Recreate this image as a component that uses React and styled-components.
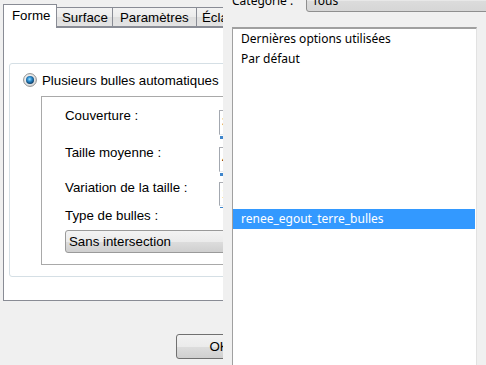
import React from "react";
import styled, { createGlobalStyle } from "styled-components";

const Global = createGlobalStyle`
  html, body { margin: 0; padding: 0; background: #f0f0f0; overflow: hidden; }
  #root { width: 486px; height: 365px; }
`;

const Screen = styled.div`
  width: 486px;
  height: 365px;
  display: flex;
  overflow: hidden;
  background: #f0f0f0;
  font-family: "Liberation Sans", Arial, sans-serif;
  font-size: 13.3px;
  color: #000;
`;

/* ---------- left dialog ---------- */
const LeftPane = styled.div`
  width: 223px;
  flex-shrink: 0;
  overflow: hidden;
  background: #f0f0f0;
`;

const Dialog = styled.div`
  width: 300px;
  padding: 4px 0 0 3px;
  display: flex;
  flex-direction: column;
`;

const TabStrip = styled.div`
  display: flex;
  align-items: flex-end;
  height: 24px;
  margin-bottom: -1px;
  position: relative;
  z-index: 1;
`;

const Tab = styled.div`
  box-sizing: border-box;
  width: ${(p) => p.$w}px;
  flex-shrink: 0;
  height: ${(p) => (p.$active ? 24 : 20)}px;
  margin-bottom: ${(p) => (p.$active ? 0 : 1)}px;
  padding-left: ${(p) => p.$pad}px;
  border: 1px solid #898c95;
  border-bottom: ${(p) => (p.$active ? "none" : "1px solid #898c95")};
  border-left: ${(p) => (p.$first || p.$active ? "1px solid #898c95" : "none")};
  background: ${(p) =>
    p.$active ? "#ffffff" : "linear-gradient(#f3f3f3, #ebebeb 50%, #dedede 51%, #e4e4e4)"};
  line-height: ${(p) => (p.$active ? 22 : 19)}px;
  white-space: nowrap;
  overflow: hidden;
`;

const TabPanel = styled.div`
  box-sizing: border-box;
  width: 292px;
  height: 274px;
  background: #ffffff;
  border: 1px solid #898c95;
  padding: 35px 0 0 5px;
`;

const GroupBox = styled.div`
  box-sizing: border-box;
  width: 280px;
  height: 214px;
  border: 1px solid #d5dfe5;
  border-radius: 3px;
  padding: 8px 0 0 13px;
  display: flex;
  flex-direction: column;
`;

const RadioRow = styled.label`
  display: flex;
  align-items: center;
  gap: 5px;
  height: 16px;
  white-space: nowrap;
`;

const InnerBox = styled.div`
  box-sizing: border-box;
  width: 240px;
  margin: 8px 0 0 18px;
  border: 1px solid #a9a9a9;
  padding: 13px 0 11px 23px;
  display: flex;
  flex-direction: column;
`;

const FieldRow = styled.div`
  display: flex;
  height: ${(p) => p.$h}px;
`;

const FieldLabel = styled.div`
  width: 154px;
  flex-shrink: 0;
  line-height: 16px;
  margin-top: -2px;
  white-space: nowrap;
`;

const EditCol = styled.div`
  display: flex;
  flex-direction: column;
`;

const EditBox = styled.div`
  box-sizing: border-box;
  width: 60px;
  height: 25px;
  background: #fff;
  border: 1px solid #e3e9ef;
  border-top-color: #abadb3;
  border-left-color: #a3a8b0;
  padding-left: 2px;
  line-height: 22px;
`;

const SpinMark = styled.div`
  width: 3px;
  height: 3px;
  margin: 1px 0 0 1px;
  background: #3f86cc;
`;

const TypeLabel = styled.div`
  line-height: 16px;
`;

const Combo = styled.div`
  box-sizing: border-box;
  width: 200px;
  height: 23px;
  margin-top: 6px;
  border: 1px solid #9a9a9a;
  border-radius: 3px;
  background: linear-gradient(#f3f3f3, #ebebeb 50%, #dddddd 51%, #cfcfcf);
  padding-left: 3px;
  line-height: 21px;
  white-space: nowrap;
`;

const ButtonRow = styled.div`
  display: flex;
  padding: 33px 0 0 173px;
`;

const Button = styled.div`
  box-sizing: border-box;
  width: 86px;
  height: 25px;
  border: 1px solid #707070;
  border-radius: 3px;
  background: linear-gradient(#f2f2f2, #ebebeb 50%, #dddddd 51%, #cfcfcf);
  text-align: center;
  line-height: 23px;
`;

/* ---------- right panel ---------- */
const RightPane = styled.div`
  flex: 1;
  min-width: 0;
  display: flex;
  flex-direction: column;
  padding-left: 9px;
  background: #f0f0f0;
  font-family: "Noto Sans", "Liberation Sans", sans-serif;
  font-size: 12px;
`;

const TopRow = styled.div`
  display: flex;
  align-items: center;
  height: 23px;
  margin-top: -11px;
`;

const TopLabel = styled.div`
  width: 74px;
  flex-shrink: 0;
  white-space: nowrap;
`;

const TopCombo = styled.div`
  box-sizing: border-box;
  flex: 1;
  height: 23px;
  margin-right: -10px;
  border: 1px solid #8f8f8f;
  border-radius: 3px;
  background: linear-gradient(#f2f2f2, #e8e8e8 50%, #dcdcdc 51%, #d6d6d6);
  padding-left: 5px;
  line-height: 21px;
`;

const ListBox = styled.div`
  flex: 1;
  margin: 15px 9px 0 0;
  background: #fff;
  border-top: 2px solid #a0a0a0;
  border-left: 1px solid #a0a0a0;
  border-right: 1px solid #e2e2e2;
  display: flex;
  flex-direction: column;
  padding-right: 1px;
`;

const ListItem = styled.div`
  height: 20px;
  line-height: 20px;
  padding-left: 8px;
  white-space: nowrap;
  background: ${(p) => (p.$selected ? "#3399ff" : "transparent")};
  color: ${(p) => (p.$selected ? "#ffffff" : "#000000")};
`;

const RadioIcon = () => (
  <svg width="14" height="14" viewBox="0 0 14 14">
    <defs>
      <linearGradient id="rOuter" x1="0" y1="0" x2="1" y2="1">
        <stop offset="0" stopColor="#f6f6f6" />
        <stop offset="1" stopColor="#d4d4d4" />
      </linearGradient>
      <radialGradient id="rDot" cx="0.45" cy="0.4" r="0.6">
        <stop offset="0" stopColor="#9ce0ff" />
        <stop offset="0.45" stopColor="#2e8ed0" />
        <stop offset="1" stopColor="#0b3a63" />
      </radialGradient>
    </defs>
    <circle cx="7" cy="7" r="6.4" fill="url(#rOuter)" stroke="#8e8f8f" strokeWidth="1" />
    <circle cx="7" cy="7" r="4" fill="url(#rDot)" />
  </svg>
);

const fields = [
  { label: "Couverture :", value: "30", h: 37 },
  { label: "Taille moyenne :", value: "4,0", h: 35 },
  { label: "Variation de la taille :", value: "1,0", h: 26 },
];

const tabs = [
  { name: "Forme", w: 54, pad: 8, active: true },
  { name: "Surface", w: 56, pad: 5 },
  { name: "Paramètres", w: 84, pad: 7 },
  { name: "Éclairage", w: 80, pad: 5 },
];

const items = [
  "Dernières options utilisées",
  "Par défaut",
  "",
  "",
  "",
  "",
  "",
  "",
  "",
  "renee_egout_terre_bulles",
  "",
];

export default function App() {
  return (
    <>
      <Global />
      <Screen>
        <LeftPane>
          <Dialog>
            <TabStrip>
              {tabs.map((t, i) => (
                <Tab key={t.name} $w={t.w} $pad={t.pad} $active={t.active} $first={i === 0}>
                  {t.name}
                </Tab>
              ))}
            </TabStrip>
            <TabPanel>
              <GroupBox>
                <RadioRow>
                  <RadioIcon />
                  Plusieurs bulles automatiques
                </RadioRow>
                <InnerBox>
                  {fields.map((f) => (
                    <FieldRow key={f.label} $h={f.h}>
                      <FieldLabel>{f.label}</FieldLabel>
                      <EditCol>
                        <EditBox>{f.value}</EditBox>
                        <SpinMark />
                      </EditCol>
                    </FieldRow>
                  ))}
                  <TypeLabel>Type de bulles :</TypeLabel>
                  <Combo>Sans intersection</Combo>
                </InnerBox>
              </GroupBox>
            </TabPanel>
            <ButtonRow>
              <Button>OK</Button>
            </ButtonRow>
          </Dialog>
        </LeftPane>
        <RightPane>
          <TopRow>
            <TopLabel>Catégorie :</TopLabel>
            <TopCombo>Tous</TopCombo>
          </TopRow>
          <ListBox>
            {items.map((it, i) => (
              <ListItem key={i} $selected={i === 9}>
                {it}
              </ListItem>
            ))}
          </ListBox>
        </RightPane>
      </Screen>
    </>
  );
}
